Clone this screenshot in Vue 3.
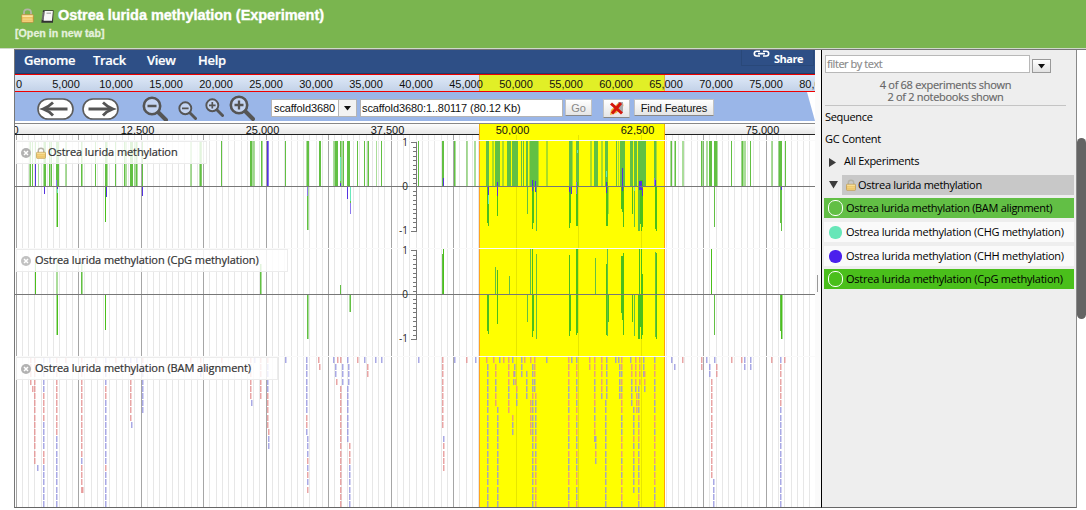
<script setup>
const menus = ['Genome', 'Track', 'View', 'Help']
const overview = Array.from({ length: 17 }, (_, i) => ({ x: i ? i * 50 + 1 : 4, t: (i * 5000).toLocaleString('en-US') }))
const ruler = Array.from({ length: 7 }, (_, i) => ({ x: i ? i * 125 - 2.5 : 0.5, t: (i * 12500).toLocaleString('en-US') }))
const grid = Array.from({ length: 128 }, (_, i) => ({ x: Math.floor(1.2 + i * 6.25), major: i % 10 === 0 }))

const colors = { g: '#62c043', d: '#4abf1b', l: '#62c04388', p: '#5533df', v: '#8b79ee', t: '#68e8bb' }

// Each entry: x, width, top, bottom, colour code, in page pixels
const parse = (s) => s.trim().split(/\s*;\s*/).filter(Boolean).map((e) => {
  const [x, w, a, b, c] = e.split(' ')
  return { x: +x - 15, w: +w, y: +a - 135, h: b - a, fill: colors[c] }
})
const full = (s, c) => s.trim().split(' ').map((e) => {
  const [x, w] = e.split(':')
  return { x: +x - 15, w: +(w || 1), y: 6, h: 45, fill: colors[c] }
})

const bars = [
  ...full('29:2 38 43:3 50:2 65:2 82 106:2 125:2 134:4 190:2 199:3 201 250:4 254 261:2 306:3 333:5 340:4 367:2 376 454:2 466:2 474:2 492:2 502:2 529:2 538 546:2 571:2 590:2 601:2 618 624 632 636 656 670:2 674:2 682:2 702:2 706:2 711 717 741:3 744:2 771:2 778:4', 'l'),
  ...full('30 32 35 44:2 49 51 56:3 81 95 105:2 115 124 130:3 136 142 200 221 250:2 261 267:2 285 307:2 319:2 335:3 340 343 347:3 357 364 368 381 442:2 454 486:3 495:5 507:4 512:6 521 523 526:2 530:2 532:6 569:3 576:3 594:4 605:3 616 620:5 630:3 634:3 638:8 654:2 671 675 701 709:3 714:3 731 742 750 779:3 785', 'g'),
  ...parse(`35 1 163 186 p; 56 1 180 186 v; 56 2 186 227 l; 57 1 186 227 d; 57 1 187 189 p; 57 1 189 193 t; 44 1 186 194 p; 105 1 186 222 d; 106 1 186 197 p; 142 1 186 196 p;
  267 2 141 186 p; 268 1 141 186 v; 307 1 186 230 g; 308 1 186 230 l; 307 1 186 196 v; 340 1 157 181 t; 340 1 183 186 p; 347 1 186 199 p; 350 1 186 201 t; 350 1 201 203 g; 350 1 203 214 v;
  418 1 141 186 g; 443 1 178 186 p; 487 2 186 223 d; 488 1 186 226 d; 488 1 187 195 p; 488 1 195 204 t; 497 1 182 216 d; 497 1 182 196 p; 527 1 186 214 g; 532 2 180 223 d; 532 1 180 191 p; 532 1 191 229 d; 535 1 181 192 p; 536 1 186 231 g;
  569 2 186 223 d; 569 1 186 228 d; 569 1 186 192 p; 571 1 186 194 p; 576 2 182 226 d; 576 1 182 194 v; 577 1 150 153 t; 606 2 182 226 d; 606 1 171 177 t; 606 1 182 193 p; 608 1 186 214 l;
  622 1 168 191 p; 621 1 186 209 d; 622 1 191 212 d; 623 1 186 227 d; 632 1 186 214 d; 634 1 186 227 g; 634 1 187 191 t; 638 2 186 231 g; 640 3 180 224 d; 639 3 181 190 p; 642 1 188 196 p; 641 1 224 231 d; 642 1 196 227 d; 654 1 178 185 v; 655 1 180 190 p; 655 2 186 229 d; 656 1 229 231 d;
  714 1 186 227 g; 780 2 186 223 g; 781 1 186 231 g; 781 1 186 190 p;`),
]
const cpg = parse(`35 1 260 294 d; 56 1 257 294 l; 57 1 257 294 l; 56 2 294 335 l; 57 1 294 335 d; 81 1 262 294 g; 82 1 262 294 l; 105 1 294 330 d; 260 1 264 294 g; 261 1 264 294 l; 307 1 294 339 g; 308 1 294 339 l; 340 1 285 294 g; 350 1 294 312 g; 349 1 294 312 l;
442 1 254 294 g; 443 1 249 294 d; 487 1 294 331 d; 488 1 294 334 d; 495 1 267 294 g; 497 1 270 324 d; 509 1 276 294 g; 527 1 294 322 g; 530 1 249 294 g; 532 1 249 337 d; 533 1 294 331 d; 536 1 254 339 g; 569 1 255 336 d; 570 1 294 331 d; 576 2 249 333 d; 576 1 333 335 d; 595 1 258 294 g; 606 1 264 335 d; 607 1 249 336 g; 608 1 294 322 d; 621 2 256 313 d; 622 1 294 320 d; 623 1 253 335 d; 632 1 294 322 d; 634 1 294 336 g; 638 2 294 339 d; 639 1 249 294 d; 640 3 294 327 d; 641 1 249 339 d; 642 1 274 335 d; 655 1 252 337 g; 656 1 253 339 d; 711 1 249 294 d; 714 1 294 335 g; 780 1 294 331 g; 781 1 294 339 d; 782 1 294 339 l`)

// Read stacks: x position and run-length colour sequence (r/b = strand, - = gap row)
const stacks = `30 rrrr;32 ----r;34 rrrrrrrrrrrrrrr;37 ---------------b;43 bbbbbrrrrbbbbrrbbbbbb;49 b;56 rrrrrrrrrrrbbbbbbbbbb;65 r;81 rrrrrrrrrrrrrrbrrrr;82 ------------------r;95 r;105 bbbbrrbbbbbbbbbrbbbbb;115 r;124 b;130 brrrrrrrr;131 ---------b;136 b;142 rbbbbbbb;190 r;200 rrb;221 r;250 rrrrrr;251 ------b;254 b;260 rrrrrr;267 rbbbbrrrrr;268 ----------rbb;285 b;306 bbbbbbbbrrb;307 -----------bbbrbrbr;318 r;319 -r;333 b;335 -bb;336 ---r;337 r;340 r;340 ----rrrrrrrrrrrrrrrrr;342 -bbb;347 b;347 ----bbbbbbbb;348 -bbb;349 ------------rrrbbbbbb;357 r;364 b;367 -rr;375 b;381 b;418 b;442 rrrrrrrrrr;443 -----------brrrr;454 b;466 r;475 b;486 r;487 -bbbbbbbbbbbbbbbbbbbb;493 r;495 -rrbbrr;497 -------bbbbbbbbbbbbbb;499 b;503 r;508 rrrrbbrr;512 b;513 --rb;514 -bb;515 ---r;516 ----rbb;512 --------rbb;521 bbb;524 r;526 --bbbb;530 r;530 ------rrrrr;532 -bbbbrbbbbbbbbbbbbbbb;534 rrrbb;535 -----rbbbbbrbbrbrrrrr;546 b;568 rrrrbbrbrrrbbrbbrrbbr;571 b;576 brrbbrbrrbrbbrbbrrbbr;589 rr;594 rrrbbrrbbrrb;595 -----------bbrb;601 rrrrrb;605 ------bbbbbbbbbbbbbbb;606 bbbbbb;615 b;618 b;619 -bbbbb;621 rrbrbrrrbbbrrrbrbrrrb;630 b;631 -rrbbbb;633 -------bbbbrbrbbbbb;635 rrrrb;636 -----rrr;638 ----bbrbrbrrbbrbbrbrb;639 rrrr;643 bbb;644 --rrb;654 brrbbrbbrrbrrrrbrrbbr;671 b;674 -b;682 r;701 rr;706 b;709 -bb;711 ---rrrrrrrrrrrrrr;714 b;716 -rr;713 -----------------bbbb;731 r;741 r;744 bb;750 bb;771 r;780 brrrrrrbbbbbbbbbbbbbb;784 r`
const reads = stacks.split(';').flatMap((s) => {
  const [x, seq] = s.trim().split(' ')
  return [...seq].map((c, i) => ({ c, x: +x - 15, y: Math.round(222 + i * 7.2) })).filter((r) => r.c !== '-')
})
const axes = [{ y: 6 }, { y: 114 }]
const labels = [
  { t: 'Ostrea lurida methylation', lock: true, k: 'a' },
  { t: 'Ostrea lurida methylation (CpG methylation)', k: 'b' },
  { t: 'Ostrea lurida methylation (BAM alignment)', k: 'c' },
]
const rows = [
  { t: 'Ostrea lurida methylation (BAM alignment)', k: 'bam' },
  { t: 'Ostrea lurida methylation (CHG methylation)', k: 'chg' },
  { t: 'Ostrea lurida methylation (CHH methylation)', k: 'chh' },
  { t: 'Ostrea lurida methylation (CpG methylation)', k: 'cpg' },
]
const lenses = [
  { k: 'big', plus: false }, { k: 'small', plus: false }, { k: 'small up', plus: true }, { k: 'big up', plus: true },
]
</script>

<template>
  <div class="page">
    <svg width="0" height="0" class="defs">
      <defs>
        <linearGradient id="gold" x1="0" y1="0" x2="0" y2="1"><stop offset="0" stop-color="#f8e3a0" /><stop offset=".5" stop-color="#e9b84c" /><stop offset="1" stop-color="#f3d58a" /></linearGradient>
        <symbol id="lock" viewBox="0 0 13 15"><path d="M3 7.500V4.500C3 .2 10 .2 10 4.500V7.500" fill="none" stroke="#b5b3a8" stroke-width="1.800" /><rect x=".6" y="6.500" width="11.800" height="8" rx="1" fill="url(#gold)" stroke="#b48a3a" stroke-width=".7" /><path d="M1.500 8.500h10M1.500 11h10" stroke="#fff0bd" stroke-width=".7" /></symbol>
      </defs>
    </svg>
    <header class="top">
      <div class="title">
        <svg width="13" height="15"><use href="#lock" /></svg>
        <svg class="book" width="13" height="13" viewBox="0 0 13 13"><path d="M2 .3h10.600L12 12.700H.3z" fill="#333" /><path d="M3.700 1h8.200l-.9 9.800H2.600z" fill="#f7f7f7" /><path d="M5.500 3.200h4.500" stroke="#999" /><path d="M1.400 3h2M1.200 5h2M1 7h2M.8 9h2" stroke="#ccc" stroke-width=".7" /></svg>
        <span>Ostrea lurida methylation (Experiment)</span>
      </div>
      <div class="open">[Open in new tab]</div>
    </header>
    <main class="frame">
      <section class="browser">
        <nav class="menu">
          <span v-for="m in menus" :key="m" :class="m.toLowerCase()">{{ m }}</span>
          <div class="share">
            <svg width="17" height="8" viewBox="0 0 17 8"><path d="M7 1.200H3.700a2.400 2.400 0 0 0 0 4.800H7M10 1.200h3.300a2.400 2.400 0 0 1 0 4.800H10M5 3.600h7" fill="none" stroke="#fff" stroke-width="1.600" /></svg>
            <b>Share</b>
          </div>
        </nav>
        <div class="overview">
          <svg width="800" height="16">
            <rect x="464" width="186" height="16" fill="#e1ef27" />
            <path d="M464.500 0V16M649.500 0V16" stroke="#e6b330" />
            <text v-for="o in overview" :key="o.t" :x="o.x" y="13">{{ o.t }}</text>
          </svg>
        </div>
        <div class="nav">
          <svg v-for="d in ['left', 'right']" :key="d" class="arrow" :class="d" width="37" height="22" viewBox="0 0 37 22"><rect x="1" y="1" width="35" height="20" rx="10" fill="#fff" stroke="#5c5c5c" stroke-width="1.600" /><path d="M30.500 11H8" stroke="#555" stroke-width="3.200" /><path d="M16 4.500Q11.500 9 6 11q6 2 10 6.500" fill="none" stroke="#555" stroke-width="2.700" /></svg>
          <svg v-for="(z, i) in lenses" :key="i" class="lens" :class="z.k" viewBox="0 0 26 26"><circle cx="10" cy="10" r="8.200" fill="#c4d4f1" stroke="#555" stroke-width="2.600" /><path d="M16.500 16.500l7.500 7.500" stroke="#555" stroke-width="4" stroke-linecap="round" /><path :d="z.plus ? 'M5.500 10h9M10 5.500v9' : 'M5.500 10h9'" stroke="#555" stroke-width="2.300" /></svg>
          <div class="combo"><span>scaffold3680</span><i><svg width="7" height="5"><path d="M0 0h7L3.500 4.500z" fill="#111" /></svg></i></div>
          <div class="loc">scaffold3680:1..80117 (80.12 Kb)</div>
          <div class="btn go">Go</div>
          <div class="btn del"><svg width="15" height="15" viewBox="0 0 15 15"><path d="M1 14l1-5 8-8 4 1 .5 3-7 7z" fill="#f0b43b" /><path d="M9 1h5v10l-3 1z" fill="#aaa" /><path d="M2 2.500l11 10M12 2L3 12.500" stroke="#d3170d" stroke-width="3" /></svg></div>
          <div class="btn find">Find Features</div>
        </div>
        <div class="ruler">
          <svg width="800" height="11">
            <rect x="464" width="186" height="11" fill="#ff0" />
            <path d="M464.500 0V11M649.500 0V11" stroke="#f3b400" />
            <text v-for="o in ruler" :key="o.t" :x="o.x" y="10.400">{{ o.t }}</text>
          </svg>
        </div>
        <div class="tracks">
          <svg class="plot" width="800" height="372" shape-rendering="crispEdges">
            <rect v-for="g in grid" :key="g.x" :x="g.x" y="0" width="1" height="372" :fill="g.major ? '#a6a6a6' : '#e7e7e7'" />
            <rect x="464" y="0" width="186" height="372" fill="#ff0" />
            <path d="M501.500 0V372M563.500 0V372M626.500 0V372" stroke="#e6e600" />
            <rect x="464" y="0" width="1" height="372" fill="#ffa41c" />
            <rect x="649" y="0" width="1" height="372" fill="#ffa500" />
            <rect v-for="y in [5, 113, 221]" :key="y" x="0" :y="y" width="800" height="1" fill="#fafafa" />
            <rect v-for="(b, i) in bars" :key="'a' + i" :x="b.x" :y="b.y" :width="b.w" :height="b.h" :fill="b.fill" />
            <rect v-for="(b, i) in cpg" :key="'c' + i" :x="b.x" :y="b.y" :width="b.w" :height="b.h" :fill="b.fill" />
            <g v-for="(r, i) in reads" :key="'r' + i" :class="r.c"><rect :x="r.x" :y="r.y" width="1" height="6" /><rect class="soft" :x="r.x + 1" :y="r.y" width="1" height="6" /></g>
            <g v-for="a in axes" :key="a.y" :transform="`translate(0 ${a.y})`">
              <rect y="45" width="800" height="1" fill="#777" />
              <path d="M396 1.500h5.500v88.500H396M396 45.500h5" fill="none" stroke="#777" />
              <path d="M401 6h-3M401 10.500h-3M401 15h-3M401 19.500h-3M401 24h-3M401 28.500h-3M401 33h-3M401 37.500h-3M401 42h-3M401 50h-3M401 54.500h-3M401 59h-3M401 63.500h-3M401 68h-3M401 72.500h-3M401 77h-3M401 81.500h-3M401 86h-3" stroke="#777" />
              <text x="393" y="5">1</text><text x="393" y="49">0</text><text x="393" y="93">-1</text>
            </g>
          </svg>
          <div v-for="l in labels" :key="l.k" class="label" :class="l.k">
            <svg class="x" width="10" height="10" viewBox="0 0 10 10"><circle cx="5" cy="5" r="5" fill="#b2b2b2" /><path d="M3 3l4 4M7 3L3 7" stroke="#fff" stroke-width="1.500" /></svg>
            <svg v-if="l.lock" class="lk" width="10" height="12"><use href="#lock" width="10" height="12" /></svg>
            <span>{{ l.t }}</span>
          </div>
        </div>
      </section>
      <div class="split"><i></i></div>
      <aside class="side">
        <div class="filter"><div class="input">filter by text</div><div class="drop"><svg width="7" height="5"><path d="M0 0h7L3.500 4.500z" fill="#111" /></svg></div></div>
        <div class="count"><div>4 of 68 experiments shown</div><div>2 of 2 notebooks shown</div></div>
        <div class="item">Sequence</div>
        <div class="item">GC Content</div>
        <div class="item all"><svg width="7" height="9"><path d="M0 0l7 4.500L0 9z" fill="#3c3c3c" /></svg><span>All Experiments</span></div>
        <div class="group"><svg class="tri" width="9" height="8"><path d="M0 0h9L4.500 7.500z" fill="#3c3c3c" /></svg><div><svg width="10" height="12"><use href="#lock" width="10" height="12" /></svg><span>Ostrea lurida methylation</span></div></div>
        <div v-for="r in rows" :key="r.k" class="row" :class="r.k"><i></i><span>{{ r.t }}</span></div>
      </aside>
      <div class="scroll"><i></i></div>
    </main>
  </div>
</template>

<style>
body { margin: 0; background: #fff; overflow: hidden; }
</style>
<style scoped>
.page { width: 1086px; height: 510px; overflow: hidden; font: 11px/14px "Open Sans", sans-serif; color: #111; }
.page * { box-sizing: border-box; white-space: nowrap; }
.defs { position: absolute; }
svg { display: block; flex: none; }
.top { height: 49px; background: #7ab54f; border-bottom: 1px solid #d0d8ca; padding: 6px 0 0 15px; font-family: "Liberation Sans", Arial, sans-serif; font-weight: bold; color: #fff; }
.title { display: flex; align-items: center; height: 18px; padding-left: 6px; font-size: 14.500px; line-height: 18px; letter-spacing: -.04px; -webkit-text-stroke: .35px #fff; }
.title svg { margin-top: 1px; }
.title .book { margin: 2px 4px 0 7px; }
.open { margin-top: 3px; font-size: 10.700px; line-height: 12px; color: #e4f1dc; -webkit-text-stroke: .3px #e4f1dc; }
.frame { display: flex; height: 459px; margin-left: 14px; border-top: 1px solid #777; }
.browser { width: 801px; height: 458px; border-left: 1px solid #777; border-bottom: 1px solid #666; overflow: hidden; }
.menu { display: flex; height: 24px; background: #2e4f86; border-bottom: 1px solid #223b68; color: #fff; font-weight: 600; font-size: 13px; line-height: 21px; padding-left: 9px; }
.menu > span { letter-spacing: -.3px; -webkit-text-stroke: .2px #fff; }
.genome { width: 69px; }
.track { width: 54px; }
.view { width: 51px; }
.share { display: flex; margin-left: auto; margin-right: 1px; width: 73px; height: 16px; border: 1px solid #294879; border-top: 0; padding-left: 11px; }
.share b { font-size: 11px; line-height: 18px; margin-left: 4px; font-weight: 700; letter-spacing: -.5px; }
.overview { height: 18px; border-top: 1px solid #e00; border-bottom: 1px solid #e00; background: linear-gradient(#dfe9f8, #c3d2e8); }
text { font: 11px "Liberation Sans", Arial, sans-serif; text-anchor: middle; fill: #111; }
.nav { display: flex; height: 29px; background: #9ab6e8; clip-path: polygon(0 0, 792px 0, 800px 100%, 0 100%); font: 11px "Liberation Sans", Arial, sans-serif; padding-left: 22px; align-items: flex-start; }
.arrow { margin-top: 6px; margin-right: 8px; }
.arrow.right { transform: scaleX(-1); margin-right: 23px; }
.lens { width: 26px; height: 26px; margin: 4px 10px 0 0; }
.lens.small { width: 19px; height: 19px; margin: 9px 8px 0 0; }
.lens.small.up { margin-top: 6px; }
.lens.big.up { margin: 3px 16px 0 -3px; }
.combo { display: flex; width: 86px; height: 18px; margin: 7px 3px 0 0; background: #fff; border: 1px solid #b5b5b5; }
.combo span { width: 66px; line-height: 16px; padding-left: 2px; letter-spacing: -.1px; }
.combo i { display: flex; flex: 1; align-items: center; justify-content: center; border-left: 1px solid #b5b5b5; background: #f3f3f3; }
.loc { width: 203px; height: 18px; margin: 7px 2px 0 0; background: #fff; border: 1px solid #b5b5b5; padding-left: 1px; line-height: 16px; letter-spacing: -.1px; }
.btn { display: flex; align-items: center; justify-content: center; height: 17px; margin-top: 7px; border: 1px solid #c2c2c2; border-bottom-color: #888; background: linear-gradient(#fff, #e5e5e5); }
.go { width: 27px; color: #888; margin-right: 11px; }
.del { width: 27px; height: 19px; margin-right: 4px; }
.find { width: 80px; letter-spacing: -.1px; }
.ruler { height: 14px; padding-top: 1px; border-top: 2px solid #fff; border-bottom: 1px solid #222; background: linear-gradient(#fff, #e7e7e7); }
.ruler svg { box-shadow: 0 -1px #888; }
.tracks { position: relative; height: 372px; }
.plot text { font: 10px "Open Sans", sans-serif; text-anchor: end; fill: #222; }
.r { fill: #e38e8e; fill-opacity: .8; }
.b { fill: #9494df; fill-opacity: .8; }
.soft { opacity: .5; }
.label { position: absolute; left: 1px; height: 23px; display: flex; align-items: center; padding-left: 4px; background: rgba(255, 255, 255, .82); border: 1px solid #ececec; color: #333; letter-spacing: -.07px; -webkit-text-stroke: .2px #333; }
.label span { margin-top: -1px; }
.label .x { margin: 1px 4px 0 0; }
.label .lk { margin: 0 2px 0 2px; }
.label.a { top: 6px; width: 191px; }
.label.a .x { margin-right: 3px; }
.label.b { top: 114px; width: 272px; }
.label.c { top: 222px; width: 262px; }
.split { width: 7px; height: 458px; background: #fafafa; border-right: 1px solid #000; border-bottom: 1px solid #666; display: flex; align-items: flex-end; }
.split i { width: 1px; height: 17px; margin: 0 0 215px 2px; background: #999; }
.side { width: 255px; height: 458px; padding: 5px 2px 0 2px; background: #eee; border-right: 1px solid #888; border-bottom: 1px solid #666; color: #000; letter-spacing: -.3px; }
.filter { display: flex; height: 19px; padding-left: 1px; }
.input { width: 205px; height: 18px; background: #fff; border: 1px solid #b8b8b8; color: #888; padding-left: 1px; line-height: 16px; letter-spacing: -.45px; -webkit-text-stroke: .15px #888; }
.drop { display: flex; align-items: center; justify-content: center; width: 19px; height: 14px; margin: 4px 0 0 2px; background: linear-gradient(#fff, #e2e2e2); border: 1px solid #999; }
.count { height: 32px; margin: 0 8px 0 1px; padding-top: 5px; border-bottom: 1px solid #c4c4c4; color: #666; text-align: center; line-height: 12px; -webkit-text-stroke: .15px #666; }
.item { height: 22px; line-height: 22px; padding-left: 1px; }
.all { display: flex; align-items: center; padding-left: 5px; }
.all svg { margin: 3px 8px 0 0; }
.group { display: flex; align-items: flex-start; height: 20px; margin: 3px 0; padding-left: 5px; }
.group .tri { margin: 6px 4px 0 0; }
.group div { display: flex; flex: 1; height: 20px; align-items: center; padding-left: 4px; background: #c8c8c8; }
.group div span { margin-left: 2px; }
.row { display: flex; align-items: center; height: 20px; margin-bottom: 4px; padding-left: 5px; background: #fafafa; }
.row i { width: 13px; height: 13px; border-radius: 6px; margin-right: 4px; }
.row span { letter-spacing: -.31px; }
.chg i { background: #67e6b8; }
.chg span, .chh span { letter-spacing: -.24px; }
.chh i { background: #4b20ed; }
.chh { margin-bottom: 3px; }
.bam { background: #62bf45; }
.cpg { background: #4abf1b; }
.cpg span { letter-spacing: -.23px; }
.bam, .cpg { padding-left: 4px; }
.bam i, .cpg i { width: 15px; height: 16px; border: 1px solid #fff; border-radius: 7px; margin-right: 3px; }
.scroll { width: 9px; padding-top: 88px; }
.scroll i { display: block; height: 181px; border-radius: 5px; background: #646464; }
</style>
